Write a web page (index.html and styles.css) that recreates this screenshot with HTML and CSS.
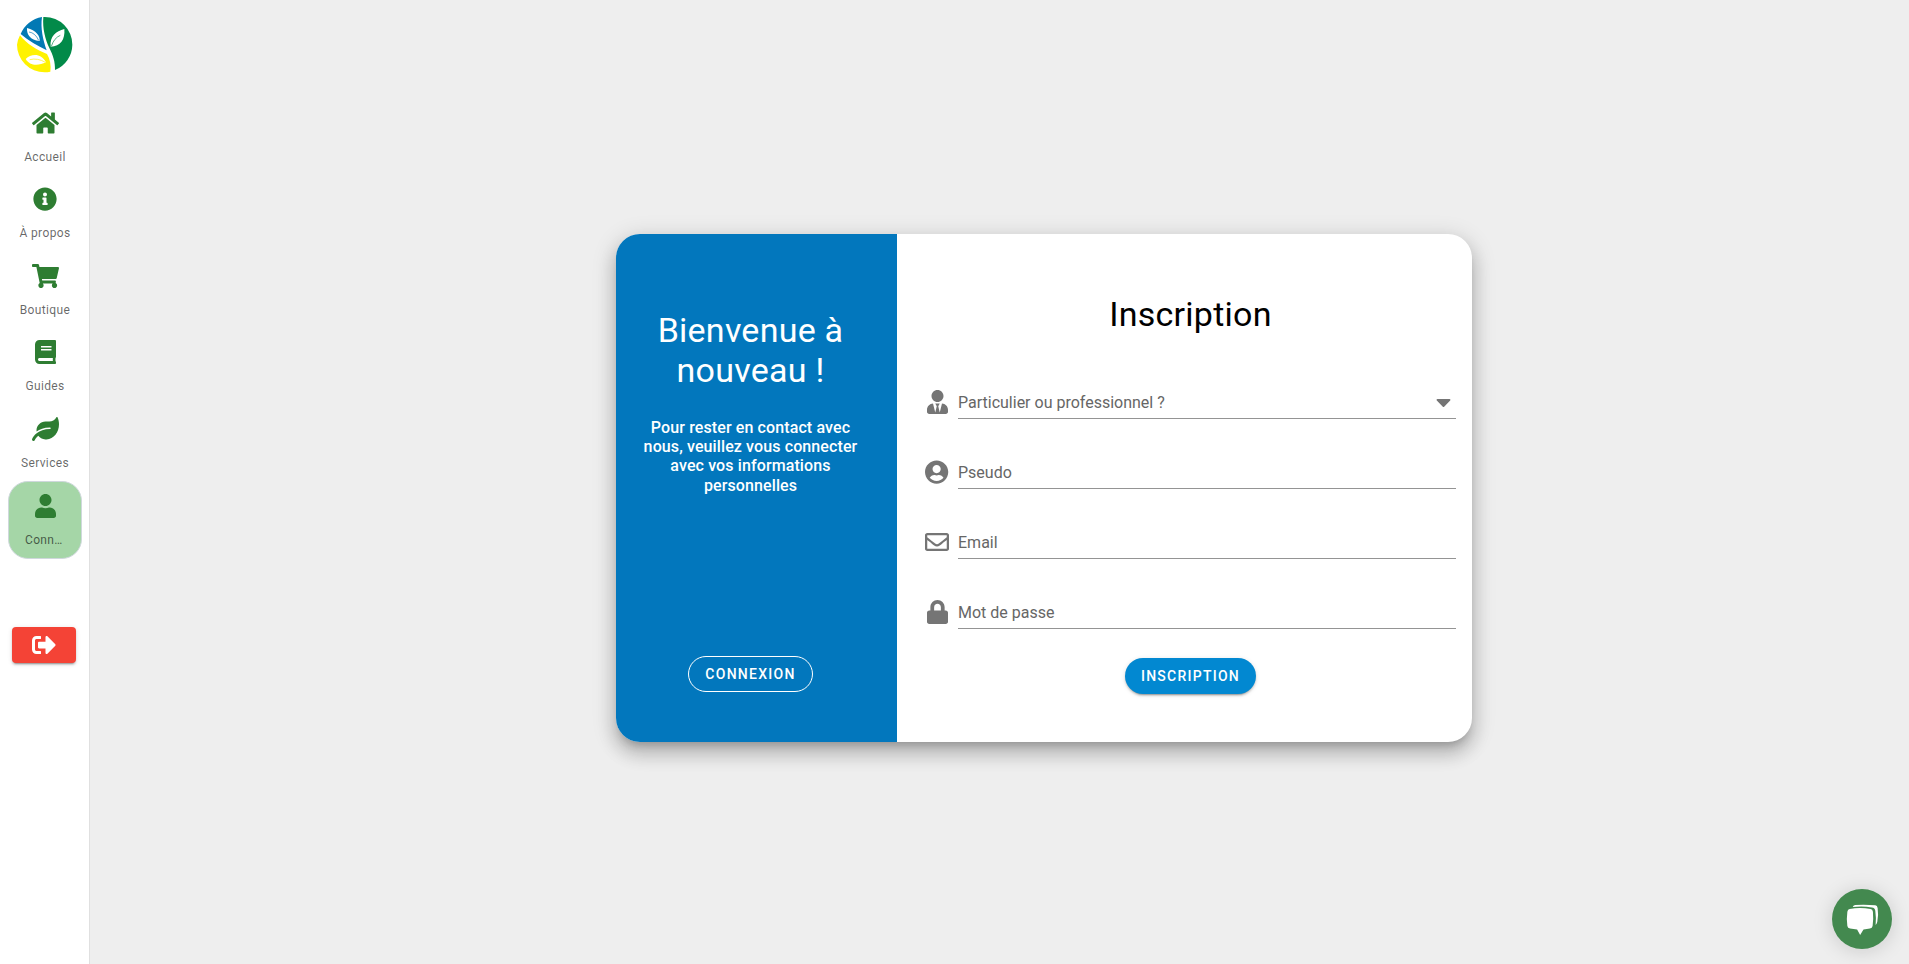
FILE: index.html
```html
<!DOCTYPE html>
<html lang="fr">
<head>
<meta charset="utf-8">
<meta name="viewport" content="width=device-width, initial-scale=1">
<title>Inscription</title>
<link rel="stylesheet" href="styles.css">
</head>
<body>
<div class="app">
  <aside class="sidebar">
    <a class="logo" href="#" aria-label="Accueil">
      <svg viewBox="54 51 168 168" aria-hidden="true">
        <path fill="#0279b4" d="M129 51A83 83 0 0 0 65 102C88 122 116 137 143 151C132 120 124 84 129 51Z"/>
        <path fill="#fff200" d="M63 106A83 83 0 0 0 54 134A83 83 0 0 0 137 217Q146 217 154 215C157 196 153 178 144 162C112 150 84 132 63 106Z"/>
        <path fill="#028a49" d="M133 51H137A83 83 0 0 1 220 134A83 83 0 0 1 168 210C169 186 162 165 151 144C139 118 130 86 133 51Z"/>
        <path fill="#fff" d="M84 84C83 104 93 120 122 123C124 108 111 91 84 84ZM196 87C171 94 152 108 155 140C184 140 199 118 196 87ZM80 177C96 161 126 158 141 187C118 198 92 198 80 177Z"/>
        <path fill="none" stroke="#0279b4" stroke-width="2" d="M90 96Q108 98 119 121"/>
        <path fill="none" stroke="#028a49" stroke-width="2" d="M184 106Q165 114 157 139"/>
        <path fill="none" stroke="#fff200" stroke-width="2" d="M92 179Q116 173 139 187"/>
      </svg>
    </a>
    <nav class="nav">
      <a class="nav-item" href="#">
        <svg class="icon" viewBox="0 0 576 512" aria-hidden="true"><path d="M280.37 148.26L96 300.11V464a16 16 0 0 0 16 16l112.06-.29a16 16 0 0 0 15.92-16V368a16 16 0 0 1 16-16h64a16 16 0 0 1 16 16v95.64a16 16 0 0 0 16 16.05L464 480a16 16 0 0 0 16-16V300L295.67 148.26a12.19 12.19 0 0 0-15.3 0zM571.6 251.47L488 182.56V44.05a12 12 0 0 0-12-12h-56a12 12 0 0 0-12 12v72.61L318.47 43a48 48 0 0 0-61 0L4.34 251.47a12 12 0 0 0-1.6 16.9l25.5 31A12 12 0 0 0 45.15 301l235.22-193.74a12.19 12.19 0 0 1 15.3 0L530.9 301a12 12 0 0 0 16.9-1.6l25.5-31a12 12 0 0 0-1.7-16.93z"/></svg>
        <span class="nav-label">Accueil</span>
      </a>
      <a class="nav-item" href="#">
        <svg class="icon" viewBox="0 0 512 512" aria-hidden="true"><path d="M256 8C119.043 8 8 119.083 8 256c0 136.997 111.043 248 248 248s248-111.003 248-248C504 119.083 392.957 8 256 8zm0 110c23.196 0 42 18.804 42 42s-18.804 42-42 42-42-18.804-42-42 18.804-42 42-42zm56 254c0 6.627-5.373 12-12 12h-88c-6.627 0-12-5.373-12-12v-24c0-6.627 5.373-12 12-12h12v-64h-12c-6.627 0-12-5.373-12-12v-24c0-6.627 5.373-12 12-12h64c6.627 0 12 5.373 12 12v100h12c6.627 0 12 5.373 12 12v24z"/></svg>
        <span class="nav-label">À propos</span>
      </a>
      <a class="nav-item" href="#">
        <svg class="icon" viewBox="0 0 576 512" aria-hidden="true"><path d="M528.12 301.319l47.273-208C578.806 78.301 567.391 64 551.99 64H159.208l-9.166-44.81C147.758 8.021 137.93 0 126.529 0H24C10.745 0 0 10.745 0 24v16c0 13.255 10.745 24 24 24h69.883l70.248 343.435C147.325 417.1 136 435.222 136 456c0 30.928 25.072 56 56 56s56-25.072 56-56c0-15.674-6.447-29.835-16.824-40h209.647C430.447 426.165 424 440.326 424 456c0 30.928 25.072 56 56 56s56-25.072 56-56c0-22.172-12.888-41.332-31.579-50.405l5.517-24.276c3.413-15.018-8.002-29.319-23.403-29.319H218.117l-6.545-32h293.145c11.206 0 20.92-7.754 23.403-18.681z"/></svg>
        <span class="nav-label">Boutique</span>
      </a>
      <a class="nav-item" href="#">
        <svg class="icon" viewBox="0 0 448 512" aria-hidden="true"><path d="M448 360V24c0-13.3-10.7-24-24-24H96C43 0 0 43 0 96v320c0 53 43 96 96 96h328c13.3 0 24-10.7 24-24v-16c0-7.5-3.5-14.3-8.9-18.7-4.2-15.4-4.2-59.3 0-74.7 5.4-4.3 8.9-11.1 8.9-18.6zM128 134c0-3.3 2.7-6 6-6h212c3.3 0 6 2.7 6 6v20c0 3.3-2.7 6-6 6H134c-3.3 0-6-2.7-6-6v-20zm0 64c0-3.3 2.7-6 6-6h212c3.3 0 6 2.7 6 6v20c0 3.3-2.7 6-6 6H134c-3.3 0-6-2.7-6-6v-20zm253.4 250H96c-17.7 0-32-14.3-32-32 0-17.6 14.4-32 32-32h285.4c-1.9 17.1-1.9 46.9 0 64z"/></svg>
        <span class="nav-label">Guides</span>
      </a>
      <a class="nav-item" href="#">
        <svg class="icon" viewBox="0 0 576 512" aria-hidden="true"><path d="M546.2 9.7c-5.6-12.5-21.6-13-28.3-1.2C486.9 62.4 431.4 96 368 96h-80C182 96 96 182 96 288c0 7 .8 13.7 1.5 20.5C161.3 262.8 253.4 224 384 224c8.8 0 16 7.2 16 16s-7.2 16-16 16C132.6 256 26 410.1 2.4 468c-6.6 16.3 1.2 34.9 17.5 41.6 16.4 6.8 35-1.1 41.8-17.3 1.5-3.6 20.9-47.9 71.9-90.6 32.4 43.9 94 85.8 174.9 77.2C465.5 467.5 576 326.7 576 154.3c0-50.2-10.8-102.2-29.8-144.6z"/></svg>
        <span class="nav-label">Services</span>
      </a>
      <a class="nav-item nav-item-active" href="#" aria-current="page">
        <svg class="icon" viewBox="0 0 448 512" aria-hidden="true"><path d="M224 256c70.7 0 128-57.3 128-128S294.7 0 224 0 96 57.3 96 128s57.3 128 128 128zm89.6 32h-16.7c-22.2 10.2-46.9 16-72.9 16s-50.6-5.8-72.9-16h-16.7C60.2 288 0 348.2 0 422.4V464c0 26.5 21.5 48 48 48h352c26.5 0 48-21.5 48-48v-41.6c0-74.2-60.2-134.4-134.4-134.4z"/></svg>
        <span class="nav-label">Connexion</span>
      </a>
    </nav>
    <button class="logout" type="button" aria-label="Déconnexion">
      <svg class="icon" viewBox="0 0 512 512" aria-hidden="true"><path d="M497 273L329 441c-15 15-41 4.5-41-17v-96H152c-13.3 0-24-10.7-24-24v-96c0-13.3 10.7-24 24-24h136V88c0-21.4 25.9-32 41-17l168 168c9.3 9.4 9.3 24.6 0 34zM192 436v-40c0-6.6-5.4-12-12-12H96c-17.7 0-32-14.3-32-32V160c0-17.7 14.3-32 32-32h84c6.6 0 12-5.4 12-12V76c0-6.6-5.4-12-12-12H96c-53 0-96 43-96 96v192c0 53 43 96 96 96h84c6.6 0 12-5.4 12-12z"/></svg>
    </button>
  </aside>

  <main class="main">
    <div class="card">
      <section class="welcome">
        <h2 class="title">Bienvenue à nouveau !</h2>
        <p class="welcome-text">Pour rester en contact avec nous, veuillez vous connecter avec vos informations personnelles</p>
        <button class="btn btn-outlined" type="button">CONNEXION</button>
      </section>
      <form class="signup">
        <h1 class="title">Inscription</h1>
        <div class="fields">
          <div class="field">
            <label class="field-icon" for="type"><svg class="icon" viewBox="0 0 448 512" aria-hidden="true"><path d="M224 256c70.7 0 128-57.3 128-128S294.7 0 224 0 96 57.3 96 128s57.3 128 128 128zm95.8 32.6L272 480l-32-136 32-56h-96l32 56-32 136-47.8-191.4C56.9 292 0 350.3 0 422.4V464c0 26.5 21.5 48 48 48h352c26.5 0 48-21.5 48-48v-41.6c0-72.1-56.9-130.4-128.2-133.8z"/></svg></label>
            <div class="control">
              <select class="input" id="type" aria-label="Particulier ou professionnel ?">
                <option>Particulier ou professionnel ?</option>
              </select>
              <svg class="icon caret" viewBox="0 0 320 512" aria-hidden="true"><path d="M31.3 192h257.3c17.8 0 26.7 21.5 14.1 34.1L174.1 354.8c-7.8 7.8-20.5 7.8-28.3 0L17.2 226.1C4.6 213.5 13.5 192 31.3 192z"/></svg>
            </div>
          </div>
          <div class="field">
            <label class="field-icon" for="pseudo"><svg class="icon" viewBox="0 0 496 512" aria-hidden="true"><path d="M248 8C111 8 0 119 0 256s111 248 248 248 248-111 248-248S385 8 248 8zm0 96c48.6 0 88 39.4 88 88s-39.4 88-88 88-88-39.4-88-88 39.4-88 88-88zm0 344c-58.7 0-111.3-26.6-146.5-68.2 18.8-35.4 55.6-59.8 98.5-59.8 2.4 0 4.8.4 7.1 1.1 13 4.2 26.6 6.9 40.9 6.9 14.3 0 28-2.7 40.9-6.9 2.3-.7 4.7-1.1 7.1-1.1 42.9 0 79.7 24.4 98.5 59.8C359.3 421.4 306.7 448 248 448z"/></svg></label>
            <div class="control"><input class="input" id="pseudo" type="text" placeholder="Pseudo" aria-label="Pseudo"></div>
          </div>
          <div class="field">
            <label class="field-icon" for="email"><svg class="icon" viewBox="0 0 512 512" aria-hidden="true"><path d="M464 64H48C21.49 64 0 85.49 0 112v288c0 26.51 21.49 48 48 48h416c26.51 0 48-21.49 48-48V112c0-26.51-21.49-48-48-48zm0 48v40.805c-22.422 18.259-58.168 46.651-134.587 106.49-16.841 13.247-50.201 45.072-73.413 44.701-23.208.375-56.579-31.459-73.413-44.701C106.18 199.465 70.425 171.067 48 152.805V112h416zM48 400V214.398c22.914 18.251 55.409 43.862 104.938 82.646 21.857 17.205 60.134 55.186 103.062 54.955 42.717.231 80.509-37.199 103.053-54.947 49.528-38.783 82.032-64.401 104.947-82.653V400H48z"/></svg></label>
            <div class="control"><input class="input" id="email" type="email" placeholder="Email" aria-label="Email"></div>
          </div>
          <div class="field">
            <label class="field-icon" for="password"><svg class="icon" viewBox="0 0 448 512" aria-hidden="true"><path d="M400 224h-24v-72C376 68.2 307.8 0 224 0S72 68.2 72 152v72H48c-26.5 0-48 21.5-48 48v192c0 26.5 21.5 48 48 48h352c26.5 0 48-21.5 48-48V272c0-26.5-21.5-48-48-48zm-104 0H152v-72c0-39.7 32.3-72 72-72s72 32.3 72 72v72z"/></svg></label>
            <div class="control"><input class="input" id="password" type="password" placeholder="Mot de passe" aria-label="Mot de passe"></div>
          </div>
        </div>
        <button class="btn btn-primary" type="button">INSCRIPTION</button>
      </form>
    </div>
  </main>

  <button class="chat" type="button" aria-label="Chat">
    <svg viewBox="108 112 104 104" aria-hidden="true">
      <path fill="#fff" d="M122 133Q152 127 184 133Q190 134 191 141Q193 162 190 183Q189 190 182 191L163 194L153 210L144 194L123 191Q116 190 115 183Q112 162 115 141Q116 134 122 133Z"/>
      <path fill="#fff" d="M131 127Q132 122 138 121Q170 119 198 122Q204 123 205 130Q208 150 204 171Q203 177 199 180Q201 158 198 138Q197 129 188 128Q160 124 131 127Z"/>
    </svg>
  </button>
</div>
</body>
</html>
```
FILE: styles.css
```css
* {
  box-sizing: border-box;
}

body {
  margin: 0;
  font-family: Roboto, "Liberation Sans", sans-serif;
  font-size: 16px;
  line-height: 1.5;
  color: #000;
  background: #eee;
}

button,
input,
select {
  font: inherit;
}

.app {
  display: flex;
  min-height: 100vh;
}

.icon {
  display: block;
  height: 24px;
  fill: currentColor;
}

/* Sidebar */
.sidebar {
  display: flex;
  flex: none;
  flex-direction: column;
  width: 90px;
  padding: 17px 7px 0 8px;
  background: #fff;
  border-right: 1px solid #e0e0e0;
}

.logo {
  align-self: center;
  height: 56px;
}

.logo svg {
  display: block;
  width: 56px;
  height: 56px;
}

.nav {
  display: flex;
  flex-direction: column;
  margin-top: 26px;
}

.nav-item {
  display: flex;
  flex-direction: column;
  align-items: center;
  gap: 12px;
  padding: 12px 0 8px;
  color: #2e7d32;
  text-decoration: none;
}

.nav-item-active {
  background: #a5d6a7;
  border: 1px solid #cfd8dc;
  border-radius: 20px;
}

.nav-label {
  font-size: 12px;
  line-height: 1.7;
  letter-spacing: 0.03em;
  white-space: nowrap;
  color: rgba(0, 0, 0, 0.6);
}

.nav-item-active .nav-label {
  max-width: 40px;
  overflow: hidden;
  text-overflow: ellipsis;
}

.logout {
  display: flex;
  align-items: center;
  justify-content: center;
  width: 64px;
  height: 36px;
  margin: 68px 0 0 4px;
  padding: 0;
  color: #fff;
  background: #f44336;
  border: 0;
  border-radius: 4px;
  box-shadow: 0 3px 1px -2px rgba(0, 0, 0, 0.2), 0 2px 2px rgba(0, 0, 0, 0.14), 0 1px 5px rgba(0, 0, 0, 0.12);
}

/* Registration card */
.main {
  display: flex;
  flex: 1;
  align-items: center;
  justify-content: center;
  padding: 12px 0 0 89px;
}

.card {
  display: grid;
  grid-template-columns: 281px 1fr;
  width: 100%;
  max-width: 856px;
  overflow: hidden;
  background: #fff;
  border-radius: 24px;
  box-shadow: 0 7px 8px -4px rgba(0, 0, 0, 0.2), 0 12px 17px 2px rgba(0, 0, 0, 0.14), 0 5px 22px 4px rgba(0, 0, 0, 0.12);
}

.title {
  margin: 0;
  font-size: 34px;
  font-weight: 400;
  line-height: 40px;
  letter-spacing: 0.007em;
  text-align: center;
}

.welcome {
  display: flex;
  flex-direction: column;
  align-items: center;
  padding: 76px 36px 50px 24px;
  color: #fff;
  background: #0277bd;
}

.welcome-text {
  margin: 28px 0 0;
  font-weight: 500;
  line-height: 1.2;
  letter-spacing: 0.007em;
  text-align: center;
}

.signup {
  display: flex;
  flex-direction: column;
  align-items: center;
  padding: 60px 16px 48px 28px;
}

.fields {
  display: flex;
  flex-direction: column;
  align-self: stretch;
  gap: 36px;
  margin: 51px 0 29px;
}

.field {
  display: flex;
  gap: 9px;
}

.field-icon {
  display: flex;
  justify-content: center;
  width: 24px;
  padding-top: 5px;
  color: #757575;
}

.control {
  display: flex;
  flex: 1;
  align-items: center;
  height: 34px;
  border-bottom: 1px solid #949494;
}

.input {
  flex: 1;
  min-width: 0;
  height: 33px;
  padding: 2px 0 0;
  color: #666;
  appearance: none;
  background: transparent;
  border: 0;
  outline: 0;
}

.input::placeholder {
  color: #666;
  opacity: 1;
}

.caret {
  margin-right: 5px;
  color: #757575;
}

.btn {
  height: 36px;
  padding: 0 16px;
  font-size: 14px;
  font-weight: 500;
  letter-spacing: 0.09em;
  color: #fff;
  border: 0;
  border-radius: 18px;
}

.btn-outlined {
  margin-top: auto;
  background: transparent;
  border: 1px solid #fff;
}

.btn-primary {
  background: #0288d1;
  box-shadow: 0 3px 1px -2px rgba(0, 0, 0, 0.2), 0 2px 2px rgba(0, 0, 0, 0.14), 0 1px 5px rgba(0, 0, 0, 0.12);
}

/* Floating chat launcher */
.chat {
  position: fixed;
  right: 17px;
  bottom: 15px;
  display: flex;
  align-items: center;
  justify-content: center;
  width: 60px;
  height: 60px;
  padding: 0;
  background: #43894f;
  border: 0;
  border-radius: 50%;
  box-shadow: 0 2px 20px rgba(0, 0, 0, 0.15);
}

.chat svg {
  width: 35px;
  height: 35px;
}
```
